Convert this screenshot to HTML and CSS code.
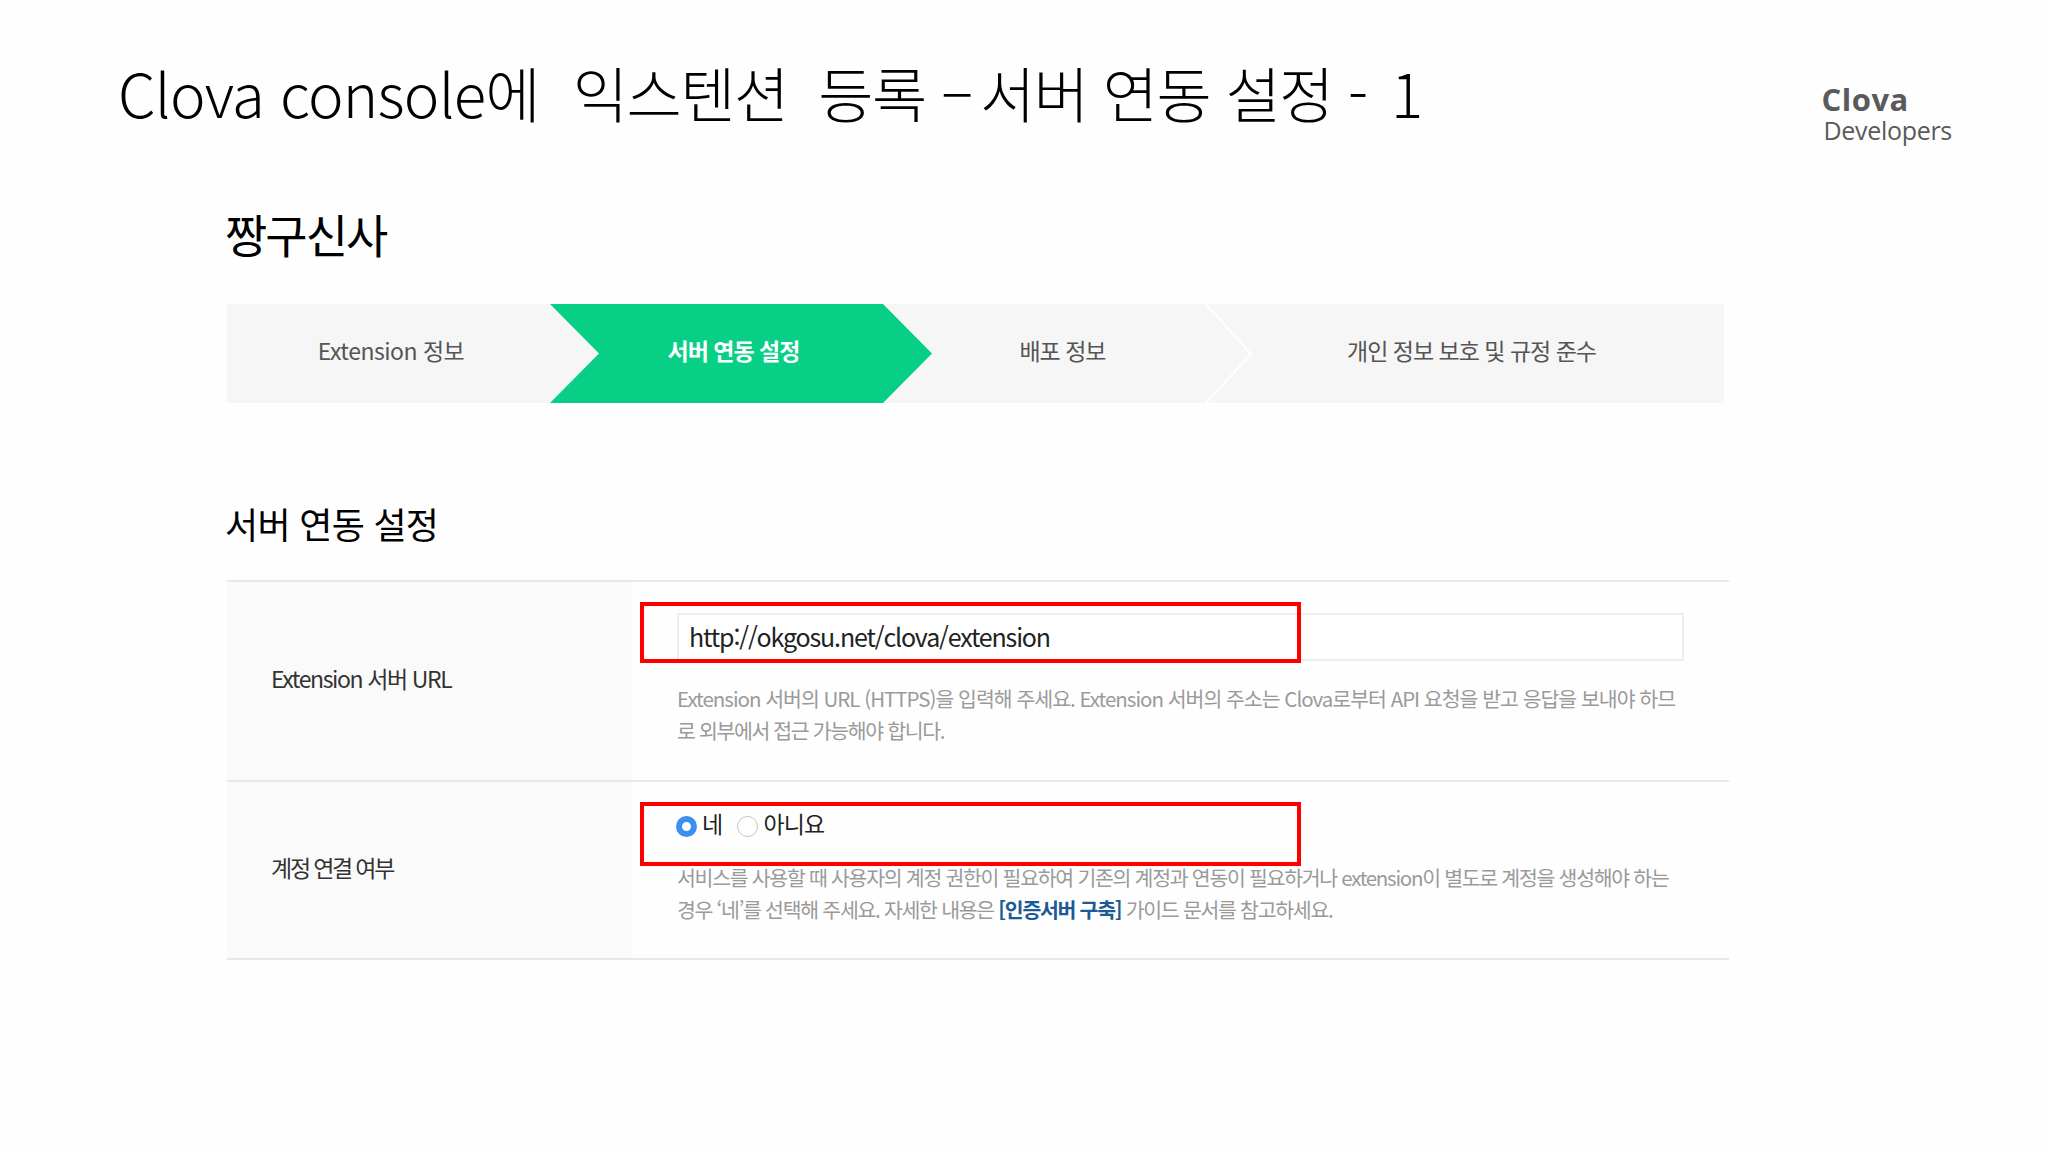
FILE: index.html
```html
<!DOCTYPE html>
<html lang="ko">
<head>
<meta charset="utf-8">
<title>Clova console</title>
<link rel="stylesheet" href="styles.css">
</head>
<body>
<main class="slide">
  <header class="top">
    <h1 class="title"><span class="t-latin">Clova console에</span>  익스텐션  등록 <span class="t-dash">– </span>서버 연동 설정 <span class="t-end">- 1</span></h1>
    <div class="brand"><b class="brand-main">Clova</b><span class="brand-sub">Developers</span></div>
  </header>
  <section class="content">
    <h2 class="app-name">짱구신사</h2>
    <ol class="steps">
      <li class="step step-1">Extension 정보</li>
      <li class="step step-2">서버 연동 설정</li>
      <li class="step step-3">배포 정보
        <svg class="sep" viewBox="0 0 48 99" width="48" height="99" aria-hidden="true"><path d="M1 0 L46 50 L1 99" fill="none" stroke="#ffffff" stroke-width="2"/></svg>
      </li>
      <li class="step step-4">개인 정보 보호 및 규정 준수</li>
    </ol>
    <h3 class="section-title">서버 연동 설정</h3>
    <div class="form">
      <div class="row row-1">
        <div class="label label-url">Extension 서버 URL</div>
        <div class="field">
          <div class="input">http://okgosu.net/clova/extension</div>
          <p class="help"><span class="help-wide">Extension 서버의 URL (HTTPS)을 입력해 주세요. Extension 서버의 주소는 Clova로부터 API 요청을 받고 응답을 보내야 하므</span><br>로 외부에서 접근 가능해야 합니다.</p>
          <div class="mark mark-1"></div>
        </div>
      </div>
      <div class="row row-2">
        <div class="label label-ko">계정 연결 여부</div>
        <div class="field">
          <div class="radios">
            <span class="radio radio-on"></span><span class="radio-text">네</span>
            <span class="radio radio-off"></span><span class="radio-text">아니요</span>
          </div>
          <p class="help help-alt">서비스를 사용할 때 사용자의 계정 권한이 필요하여 기존의 계정과 연동이 필요하거나 extension이 별도로 계정을 생성해야 하는<br>경우 ‘네’를 선택해 주세요. 자세한 내용은 <a class="link">[인증서버 구축]</a> 가이드 문서를 참고하세요.</p>
          <div class="mark mark-2"></div>
        </div>
      </div>
    </div>
  </section>
</main>
</body>
</html>
```
FILE: styles.css
```css
* { box-sizing: border-box; }
html, body { margin: 0; padding: 0; }
body {
  width: 2048px;
  height: 1152px;
  overflow: hidden;
  background: #fefefe;
  color: #000;
  font-family: "Noto Sans CJK KR", "Noto Sans", sans-serif;
}
.slide { display: flex; flex-direction: column; padding-left: 118px; }
.top { display: flex; justify-content: space-between; align-items: flex-start; padding-top: 52px; height: 190px; }
.title {
  margin: 0;
  font-size: 60px;
  line-height: 80px;
  font-weight: 300;
  white-space: pre;
  letter-spacing: -1.5px;
  color: #000;
}
.t-latin { letter-spacing: -.8px; margin-right: 2.5px; }
.t-dash { letter-spacing: -5px; }
.t-end { letter-spacing: 3px; }
.brand { display: flex; flex-direction: column; margin-right: 96px; margin-top: 29px; color: #5a5a5a; font-family: "Open Sans", "Noto Sans", sans-serif; }
.brand-main { font-size: 31px; line-height: 36px; font-weight: 700; letter-spacing: .5px; }
.brand-sub { font-size: 25px; line-height: 26px; padding-left: 2px; font-weight: 400; letter-spacing: -.3px; }
.content { display: flex; flex-direction: column; margin-left: 109px; width: 1502px; }
.app-name { margin: 0 0 0 -2px; font-size: 46px; line-height: 60px; font-weight: 400; letter-spacing: -2px; height: 114px; padding-top: 13px; }
.steps {
  display: flex;
  list-style: none;
  margin: 0;
  padding: 0;
  width: 1497px;
  height: 99px;
  background: #f6f6f6;
  font-size: 23px;
  color: #555;
  letter-spacing: -.5px;
}
.step { display: flex; align-items: center; justify-content: center; height: 99px; padding-bottom: 8px; position: relative; white-space: nowrap; }
.step-1 { width: 323px; padding-left: 5px; }
.step-2 {
  width: 382px;
  padding-right: 15px;
  background: #07d086;
  color: #fff;
  font-weight: 700;
  letter-spacing: -1px;
  clip-path: polygon(0 0, 333px 0, 100% 50%, 333px 100%, 0 100%, 49px 50%);
}
.step-3 { width: 321px; padding-right: 60px; letter-spacing: -1px; }
.step-4 { width: 471px; padding-right: 34px; letter-spacing: -1px; }
.sep { position: absolute; right: 0; top: 0; }
.section-title { margin: 0 0 0 -2px; padding-top: 95px; height: 177px; font-size: 36px; line-height: 50px; font-weight: 400; letter-spacing: -.7px; }
.form { border-top: 2px solid #e8e8e8; }
.row { display: grid; grid-template-columns: 405px minmax(0, 1fr); border-bottom: 2px solid #e8e8e8; }
.row-1 { height: 200px; }
.row-2 { height: 178px; }
.label { display: flex; align-items: center; padding: 0 0 6px 44px; background: #fafafa; font-size: 23px; color: #333; }
.label-url { letter-spacing: -1.4px; }
.label-ko { letter-spacing: -2.2px; }
.field { position: relative; padding: 31px 45px 0; }
.input {
  height: 48px;
  display: flex;
  align-items: center;
  padding: 0 0 2px 10px;
  border: 2px solid #eeeeee;
  background: #fff;
  font-size: 25px;
  color: #222;
  letter-spacing: -1.15px;
}
.help { margin: 21px 0 0; font-size: 20.5px; line-height: 32px; color: #9a9a9a; letter-spacing: -1.35px; white-space: nowrap; }
.help-wide { letter-spacing: -1px; }
.help-alt { letter-spacing: -1.28px; }
.link { color: #1c5a96; font-weight: 700; }
.radios { display: flex; align-items: center; height: 28px; margin-top: -1px; font-size: 23px; color: #222; }
.radio { display: block; width: 21px; height: 21px; border-radius: 50%; flex: none; }
.radio-on { margin-left: -1px; border: 6.5px solid #3b8ff0; background: #fff; }
.radio-off { margin-left: 15px; border: 1px solid #c4c4c4; background: #fff; }
.radio-text { margin-left: 5px; letter-spacing: -.8px; line-height: 28px; position: relative; top: -3px; }
.mark { position: absolute; left: 8px; width: 661px; border: 4px solid #fe0000; }
.mark-1 { top: 20px; height: 61px; }
.mark-2 { top: 20px; height: 64px; }
```
